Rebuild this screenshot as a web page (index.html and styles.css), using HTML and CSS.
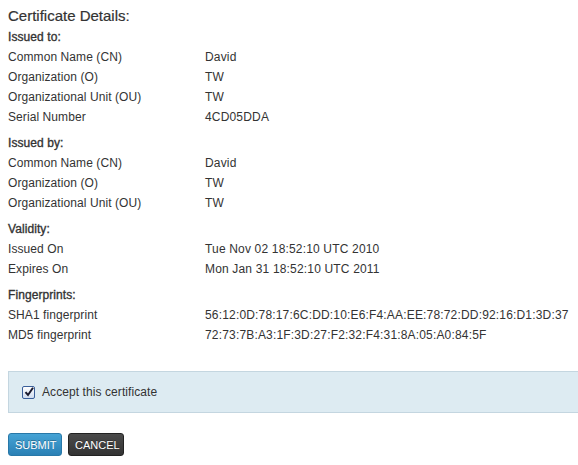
FILE: index.html
```html
<!DOCTYPE html>
<html>
<head>
<meta charset="utf-8">
<link rel="stylesheet" href="styles.css">
</head>
<body>
<div class="page">
  <h2 class="title">Certificate Details:</h2>
  <div class="section">
    <div class="sec-head">Issued to:</div>
    <div class="row"><span class="lbl">Common Name (CN)</span><span class="val">David</span></div>
    <div class="row"><span class="lbl">Organization (O)</span><span class="val">TW</span></div>
    <div class="row"><span class="lbl">Organizational Unit (OU)</span><span class="val">TW</span></div>
    <div class="row"><span class="lbl">Serial Number</span><span class="val">4CD05DDA</span></div>
  </div>
  <div class="section">
    <div class="sec-head">Issued by:</div>
    <div class="row"><span class="lbl">Common Name (CN)</span><span class="val">David</span></div>
    <div class="row"><span class="lbl">Organization (O)</span><span class="val">TW</span></div>
    <div class="row"><span class="lbl">Organizational Unit (OU)</span><span class="val">TW</span></div>
  </div>
  <div class="section">
    <div class="sec-head">Validity:</div>
    <div class="row"><span class="lbl">Issued On</span><span class="val">Tue Nov 02 18:52:10 UTC 2010</span></div>
    <div class="row"><span class="lbl">Expires On</span><span class="val">Mon Jan 31 18:52:10 UTC 2011</span></div>
  </div>
  <div class="section">
    <div class="sec-head">Fingerprints:</div>
    <div class="row"><span class="lbl">SHA1 fingerprint</span><span class="val">56:12:0D:78:17:6C:DD:10:E6:F4:AA:EE:78:72:DD:92:16:D1:3D:37</span></div>
    <div class="row"><span class="lbl">MD5 fingerprint</span><span class="val">72:73:7B:A3:1F:3D:27:F2:32:F4:31:8A:05:A0:84:5F</span></div>
  </div>
  <div class="accept">
    <label class="check"><span class="box"><svg width="10" height="10" viewBox="0 0 10 10"><path d="M1.5 5.2 L4 8 L9 0.8" fill="none" stroke="#1a1a2e" stroke-width="2"/></svg></span>Accept this certificate</label>
  </div>
  <div class="actions">
    <button class="btn btn-submit">SUBMIT</button>
    <button class="btn btn-cancel">CANCEL</button>
  </div>
</div>
</body>
</html>
```

FILE: styles.css
```css
html, body { margin: 0; padding: 0; background: #fff; }
body {
  font-family: "Liberation Sans", Arial, sans-serif;
  font-size: 12px;
  color: #333;
  letter-spacing: 0.08px;
}
.page { padding: 7px 0 0 8px; }
.title {
  margin: 0 0 3px 0;
  font-size: 15px;
  font-weight: normal;
  line-height: 18px;
  color: #333;
  letter-spacing: 0;
  -webkit-text-stroke: 0.2px #333;
}
.section { margin-bottom: 7px; }
.sec-head {
  line-height: 18px;
  font-weight: normal;
  -webkit-text-stroke: 0.35px #333;
  margin-bottom: 1px;
}
.row { display: flex; line-height: 20px; }
.lbl { width: 197px; flex: none; }
.val { flex: none; letter-spacing: 0.17px; }
.accept {
  margin-top: 26px;
  height: 40px;
  background: #ddebf2;
  border-top: 1px solid #c4d6e0;
  border-bottom: 1px solid #c4d6e0;
  border-left: 1px solid #c4d6e0;
  display: flex;
  align-items: center;
  padding-left: 13px;
}
.check { display: flex; align-items: center; gap: 7px; font-size: 12px; color: #333; }
.box {
  width: 11px; height: 11px;
  border: 1px solid #3a5f9a;
  background: linear-gradient(#fff, #cfdcef);
  display: flex; align-items: center; justify-content: center;
  border-radius: 2px;
}
.actions { margin-top: 20px; display: flex; gap: 6px; }
.btn {
  font-family: "Liberation Sans", Arial, sans-serif;
  font-size: 11px;
  color: #fff;
  height: 23px;
  padding: 0 6px;
  border-radius: 3px;
  border: none;
  letter-spacing: 0;
  text-shadow: 0 -1px 0 rgba(0,0,0,0.3);
}
.btn-submit {
  background: linear-gradient(#45a3d5, #2a80b5);
  border: 1px solid #2878a8;
  width: 54px;
}
.btn-cancel {
  background: linear-gradient(#4b4b4b, #333);
  border: 1px solid #222;
  width: 56px;
}
```
